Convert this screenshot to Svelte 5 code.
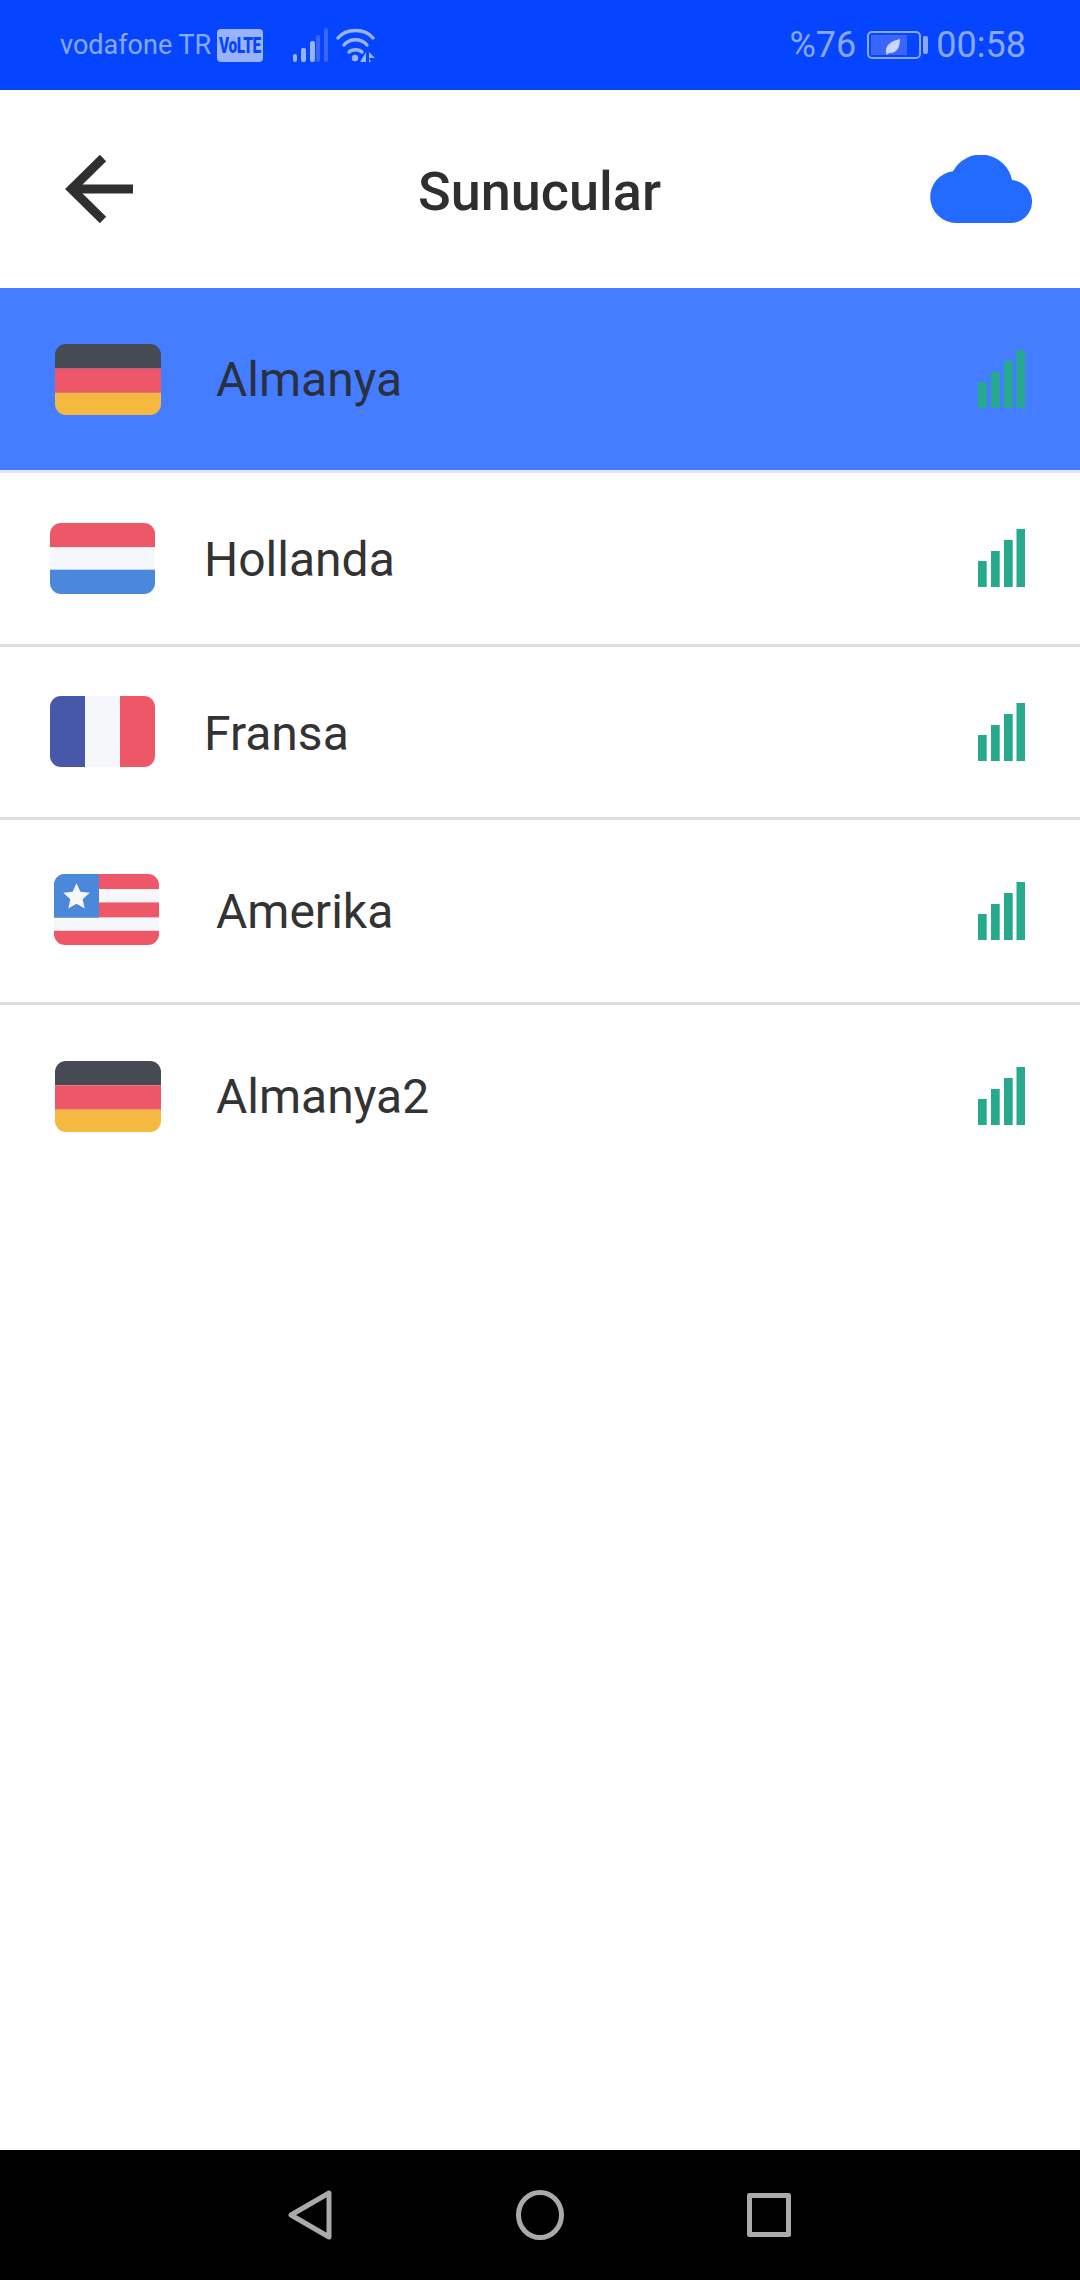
<script lang="ts">
  type Server = { name: string; flag: string; kind: string };

  const servers: Server[] = [
    { name: "Almanya", flag: "de", kind: "tall active" },
    { name: "Hollanda", flag: "nl", kind: "short" },
    { name: "Fransa", flag: "fr", kind: "short" },
    { name: "Amerika", flag: "us", kind: "tall us" },
    { name: "Almanya2", flag: "de", kind: "tall" },
  ];

  const bars = [
    { x: 0, h: 26 },
    { x: 13, h: 36 },
    { x: 26, h: 47 },
    { x: 38.5, h: 58 },
  ];

  const usStripes = [
    { y: 0, h: 15, c: "#ee5768" },
    { y: 15, h: 13, c: "#f5f7fa" },
    { y: 28, h: 15, c: "#ee5768" },
    { y: 43, h: 13, c: "#f5f7fa" },
    { y: 56, h: 14, c: "#ee5768" },
  ];
</script>

{#snippet flagIcon(code: string)}
  <svg class="flag" viewBox="0 0 105 70" preserveAspectRatio="none">
    {#if code === "de"}
      <rect width="105" height="24" fill="#464a54" />
      <rect y="24" width="105" height="24" fill="#ee5768" />
      <rect y="48" width="105" height="22" fill="#f5b942" />
    {:else if code === "nl"}
      <rect width="105" height="24" fill="#ee5768" />
      <rect y="24" width="105" height="22" fill="#f5f7fa" />
      <rect y="46" width="105" height="24" fill="#4a88dc" />
    {:else if code === "fr"}
      <rect width="35" height="70" fill="#4758a8" />
      <rect x="35" width="35" height="70" fill="#f5f7fa" />
      <rect x="70" width="35" height="70" fill="#ee5768" />
    {:else}
      {#each usStripes as s}
        <rect y={s.y} width="105" height={s.h} fill={s.c} />
      {/each}
      <rect width="45" height="43" fill="#4a88dc" />
      <path d="M22.5 9l3.9 8.6 9.3 1-7 6.3 2 9.2-8.2-4.7-8.2 4.7 2-9.2-7-6.3 9.3-1z" fill="#f5f7fa" />
    {/if}
  </svg>
{/snippet}

<div class="page">
  <div class="status">
    <span class="carrier">vodafone TR</span>
    <span class="volte"><span>VoLTE</span></span>
    <svg class="signal" width="35" height="34" viewBox="0 0 35 34">
      <rect x="0" y="26" width="4" height="8" rx="2" fill="#9ab3ff" />
      <rect x="8" y="20" width="5" height="14" rx="2" fill="#9ab3ff" />
      <rect x="17" y="13" width="5" height="21" rx="2" fill="#9ab3ff" />
      <rect x="23" y="7" width="4" height="27" rx="2" fill="#3a66ff" />
      <rect x="31" y="0" width="4" height="34" rx="2" fill="#3a66ff" />
    </svg>
    <svg class="wifi" width="40" height="34" viewBox="0 0 40 34" fill="none" stroke="#9ab3ff" stroke-width="3.4" stroke-linecap="round">
      <path d="M2 10C10 0 29 0 37 10" />
      <path d="M8 17C14 10 25 10 31 17" />
      <path d="M13 24C16 21 23 21 26 24" />
      <circle cx="19" cy="30" r="3.2" fill="#9ab3ff" stroke="none" />
      <path d="M30 24v10h-6zM33 24l6 6-6 0zM33 30v4h2z" fill="#9ab3ff" stroke="none" />
    </svg>
    <span class="spacer"></span>
    <span class="clock">%76</span>
    <svg class="battery" width="61" height="28" viewBox="0 0 61 28">
      <rect x="1" y="1" width="52" height="26" rx="4" fill="none" stroke="#8aa8ff" stroke-width="2" />
      <rect x="4" y="4" width="36" height="20" fill="#3a66ff" />
      <path d="M19 22c-1-7 4-12 14-14 0 9-4 15-11 14l-2 2z" fill="#c9d6ff" />
      <rect x="56" y="5" width="5" height="18" rx="2" fill="#8aa8ff" />
    </svg>
    <span class="clock">00:58</span>
  </div>

  <header class="topbar">
    <svg class="back" width="68" height="68" viewBox="0 0 68 68" fill="none" stroke="#2f2f2f" stroke-width="9">
      <path d="M68 34H6" />
      <path d="M38 3L6.500 34 38 65" />
    </svg>
    <h1>Sunucular</h1>
    <svg class="cloud" width="102" height="68" viewBox="0 0 102 68">
      <path d="M26 68A26 26 0 0 1 23 16.200 31.700 31.700 0 0 1 82 25.050 21.500 21.500 0 0 1 80.500 68Z" fill="#236bff" />
    </svg>
  </header>

  <ul class="list">
    {#each servers as server}
      <li class="row {server.kind}">
        {@render flagIcon(server.flag)}
        <span class="name">{server.name}</span>
        <svg class="bars" width="47" height="58" viewBox="0 0 47 58">
          {#each bars as b}
            <rect x={b.x} y={58 - b.h} width="8.700" height={b.h} fill="#26a98c" />
          {/each}
        </svg>
      </li>
    {/each}
  </ul>

  <nav class="navbar">
    <svg width="44" height="50" viewBox="0 0 44 50" fill="none" stroke="#aaa" stroke-width="5" stroke-linejoin="round">
      <path d="M3 25L41 3V47Z" />
    </svg>
    <svg width="48" height="50" viewBox="0 0 48 50" fill="none" stroke="#aaa" stroke-width="5">
      <ellipse cx="24" cy="25" rx="21.500" ry="22.500" />
    </svg>
    <svg width="44" height="44" viewBox="0 0 44 44" fill="none" stroke="#aaa" stroke-width="5" stroke-linejoin="round">
      <rect x="2.500" y="2.500" width="39" height="39" />
    </svg>
  </nav>
</div>

<style>
  :global(body) {
    margin: 0;
    background: #fff;
    font-family: Roboto, "Liberation Sans", sans-serif;
  }

  .page {
    display: flex;
    flex-direction: column;
    height: 2280px;
    width: 1080px;
    overflow: hidden;
  }

  .status {
    display: flex;
    align-items: center;
    flex: 0 0 90px;
    box-sizing: border-box;
    padding: 0 54px 0 60px;
    background: #0545ff;
    color: #8aa8ff;
  }

  .carrier {
    font-size: 27px;
    white-space: nowrap;
  }

  .volte {
    display: flex;
    align-items: center;
    justify-content: center;
    width: 46px;
    height: 33px;
    margin-left: 6px;
    border-radius: 4px;
    background: #9ab3ff;
    color: #0545ff;
    font-size: 22px;
    font-weight: 900;
  }

  .volte span {
    transform: scaleX(0.7);
    letter-spacing: -0.5px;
  }

  .signal {
    margin-left: 30px;
  }

  .wifi {
    margin-left: 8px;
  }

  .spacer {
    flex: 1;
  }

  .clock {
    font-size: 36px;
  }

  .battery {
    margin: 0 8px 0 11px;
  }

  .topbar {
    display: flex;
    align-items: center;
    justify-content: space-between;
    flex: 0 0 198px;
    box-sizing: border-box;
    padding: 0 48px 0 65px;
  }

  h1 {
    margin: 0 0 0 16px;
    padding-top: 5px;
    color: #2f2f2f;
    font-size: 54px;
    font-weight: 500;
  }

  .list {
    flex: 1;
    margin: 0;
    padding: 0;
    list-style: none;
  }

  .row {
    display: flex;
    align-items: center;
    box-sizing: border-box;
    padding: 0 55px 0 55px;
    border-bottom: 3px solid #dedede;
    color: #333;
    font-size: 48px;
  }

  .row:last-child {
    height: 182px;
    border-bottom: 0;
  }

  .tall {
    height: 185px;
  }

  .short {
    height: 173.5px;
    padding-left: 50px;
  }

  .us {
    padding-left: 54px;
  }

  .active {
    background: #447dff;
    border-bottom-color: #dfe5f3;
    color: #2b3040;
  }

  .flag {
    flex: 0 0 106px;
    height: 71px;
    border-radius: 11px;
  }

  .short .flag {
    flex-basis: 105px;
  }

  .us .flag {
    flex-basis: 105px;
    margin-bottom: 4px;
  }

  .name {
    flex: 1;
    margin-left: 55px;
  }

  .short .name {
    margin-left: 49px;
    padding-top: 3px;
  }

  .us .name {
    margin-left: 57px;
  }

  .navbar {
    display: flex;
    align-items: center;
    flex: 0 0 130px;
    box-sizing: border-box;
    padding: 0 289px 0 288px;
    justify-content: space-between;
    background: #000;
  }
</style>
